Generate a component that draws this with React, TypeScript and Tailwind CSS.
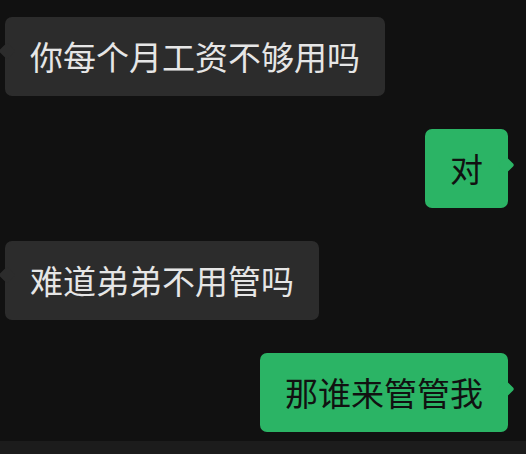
import React from 'react';

type Msg = { text: string; mine: boolean };

const messages: Msg[] = [
  { text: '你每个月工资不够用吗', mine: false },
  { text: '对', mine: true },
  { text: '难道弟弟不用管吗', mine: false },
  { text: '那谁来管管我', mine: true },
];

function Bubble({ text, mine }: Msg) {
  return (
    <div className={mine ? 'flex justify-end pr-[18px]' : 'flex justify-start pl-[5px]'}>
      <div
        className={
          mine
            ? 'relative h-[79px] flex items-center px-[25px] rounded-[7px] bg-[#2bb465] text-[#111111]'
            : 'relative h-[79px] flex items-center px-[25px] rounded-[7px] bg-[#2c2c2c] text-[#e6e6e6]'
        }
      >
        {/* tail */}
        <div
          className={
            mine
              ? 'absolute top-[30px] right-[-4px] w-[12px] h-[12px] rotate-45 rounded-[2px] bg-[#2bb465]'
              : 'absolute top-[28px] left-[-4px] w-[12px] h-[12px] rotate-45 rounded-[2px] bg-[#2c2c2c]'
          }
        ></div>
        <span className="relative text-[33px] leading-none">{text}</span>
      </div>
    </div>
  );
}

export default function App() {
  return (
    <div
      className="h-[454px] w-[526px] bg-[#111111] flex flex-col overflow-hidden"
      style={{ fontFamily: '"Noto Sans CJK SC", "Noto Sans", sans-serif' }}
    >
      <div className="flex-1 flex flex-col gap-[33px] pt-[17px]">
        {messages.map((m, i) => (
          <Bubble key={i} text={m.text} mine={m.mine} />
        ))}
      </div>
      <div className="h-[13px] bg-[#1c1c1c]"></div>
    </div>
  );
}
